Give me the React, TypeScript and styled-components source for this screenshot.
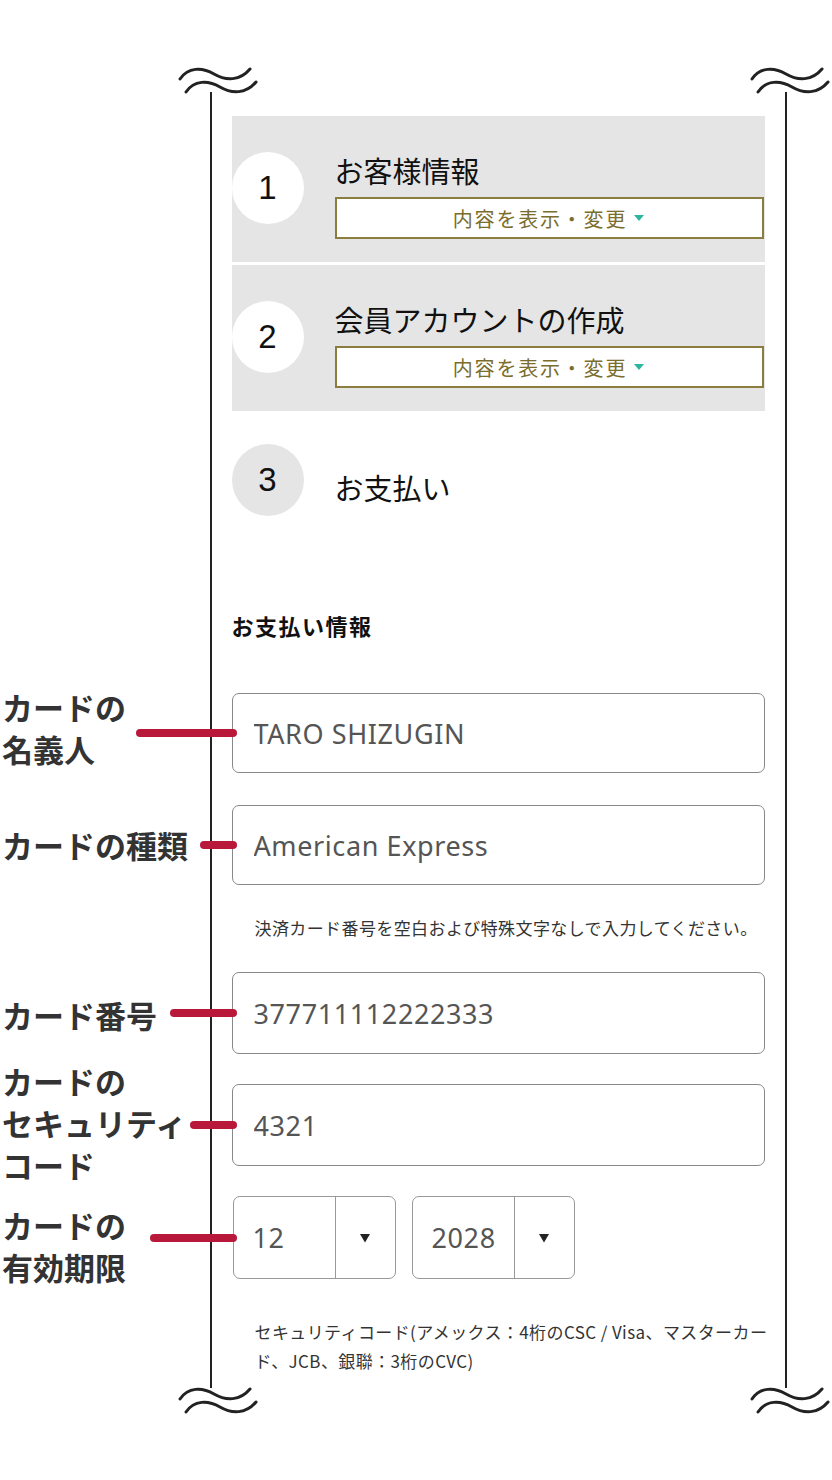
import React from 'react';
import styled, { createGlobalStyle } from 'styled-components';

const Global = createGlobalStyle`
  html, body { margin: 0; padding: 0; background: #fff; }
  body { font-family: "Noto Sans CJK JP", "Noto Sans", sans-serif; color: #222; }
  * { box-sizing: border-box; }
`;

const Page = styled.div`
  width: 832px;
  min-height: 1480px;
  padding-top: 64px;
  background: #fff;
`;

const WaveRow = styled.div<{ $top?: boolean }>`
  display: flex;
  justify-content: space-between;
  height: 32px;
  padding: 0 2px 0 178px;
  margin: ${(p) => (p.$top ? '0 0 -4px 0' : '-4px 0 0 0')};
  position: relative;
  z-index: 2;
`;

const Row = styled.div`
  display: grid;
  grid-template-columns: 210px 577px;
`;

const LabelCell = styled.div<{ $h: number }>`
  align-self: end;
  height: ${(p) => p.$h}px;
  display: flex;
  align-items: center;
  padding-left: 2px;
`;

const Label = styled.div<{ $dy: number }>`
  font-size: 31px;
  font-weight: 700;
  line-height: 42px;
  color: #333;
  white-space: nowrap;
  transform: translateY(${(p) => p.$dy}px);
`;

const Connector = styled.div<{ $w: number }>`
  width: ${(p) => p.$w}px;
  height: 8px;
  border-radius: 4px;
  background: #b8193b;
  margin-left: auto;
  margin-right: -27px;
  flex-shrink: 0;
  position: relative;
  z-index: 1;
`;

const Lane = styled.div<{ $pt: number; $pb?: number }>`
  border-left: 2.5px solid #222;
  border-right: 2.5px solid #222;
  padding: ${(p) => p.$pt}px 20.5px ${(p) => p.$pb ?? 0}px 19.5px;
  display: flex;
  flex-direction: column;
`;

const StepCard = styled.div`
  display: flex;
  align-items: flex-start;
  gap: 31px;
  background: #e5e5e5;
  padding: 36px 1px 23px 0;
  & + & { margin-top: 3px; }
`;

const Circle = styled.div<{ $grey?: boolean }>`
  width: 72px;
  height: 72px;
  flex-shrink: 0;
  border-radius: 50%;
  background: ${(p) => (p.$grey ? '#e5e5e5' : '#fff')};
  display: flex;
  align-items: center;
  justify-content: center;
  font-family: "Liberation Sans", Arial, sans-serif;
  font-size: 33px;
  color: #111;
`;

const StepBody = styled.div`
  flex: 1;
  display: flex;
  flex-direction: column;
  padding-top: 1px;
`;

const StepTitle = styled.div<{ $pt?: number }>`
  font-size: 29px;
  line-height: 34px;
  color: #111;
  padding-top: ${(p) => p.$pt ?? 0}px;
`;

const ToggleButton = styled.div`
  margin-top: 10px;
  height: 42px;
  border: 2px solid #8a7d3e;
  background: #fff;
  color: #7b6d2c;
  font-size: 20px;
  letter-spacing: 1.8px;
  display: flex;
  align-items: center;
  justify-content: center;
  gap: 6px;
`;

const StepPlain = styled.div`
  display: flex;
  align-items: center;
  gap: 31px;
  margin-top: 33px;
`;

const Heading = styled.div`
  margin-top: 95px;
  font-size: 22px;
  font-weight: 700;
  line-height: 28px;
  letter-spacing: 1.5px;
  color: #111;
`;

const TextInput = styled.input<{ $h: number }>`
  width: 100%;
  height: ${(p) => p.$h}px;
  border: 1.5px solid #888;
  border-radius: 7px;
  padding: 0 21px;
  background: transparent;
  font-family: "Noto Sans", "Noto Sans CJK JP", sans-serif;
  font-size: 27px;
  letter-spacing: 0.6px;
  color: #555;
  outline: none;
`;

const Note = styled.div<{ $mb?: number }>`
  padding-left: 23px;
  font-size: 17px;
  line-height: 24px;
  letter-spacing: 0.4px;
  color: #333;
  margin-bottom: ${(p) => p.$mb ?? 0}px;
  white-space: nowrap;
`;

const FootNote = styled(Note)`
  line-height: 29px;
`;

const SelectRow = styled.div`
  display: flex;
  gap: 16px;
  padding-left: 1px;
`;

const SelectBox = styled.div`
  width: 163px;
  height: 83px;
  border: 1.5px solid #999;
  border-radius: 7px;
  display: flex;
`;

const SelectValue = styled.div`
  width: 102px;
  border-right: 1.5px solid #999;
  display: flex;
  align-items: center;
  padding-left: 19px;
  font-family: "Noto Sans", "Noto Sans CJK JP", sans-serif;
  font-size: 27px;
  letter-spacing: 0.6px;
  color: #555;
`;

const SelectArrow = styled.div`
  flex: 1;
  display: flex;
  align-items: center;
  justify-content: center;
`;

const Wave = () => (
  <svg width="80" height="32" viewBox="0 0 80 32" fill="none">
    <path d="M2 15 C 10 3, 24 3, 36 10 S 62 17, 72 5" stroke="#222" strokeWidth="3" strokeLinecap="round" />
    <path d="M8 28 C 16 16, 30 16, 42 23 S 68 30, 78 18" stroke="#222" strokeWidth="3" strokeLinecap="round" />
  </svg>
);

const Caret = () => (
  <svg width="12" height="8" viewBox="0 0 12 8">
    <polygon points="1,1 11,1 6,7" fill="#2cb5a0" />
  </svg>
);

const DownArrow = () => (
  <svg width="10" height="10" viewBox="0 0 10 10">
    <polygon points="0,1 10,1 5,9.5" fill="#222" />
  </svg>
);

type FieldProps = {
  label: React.ReactNode;
  dy: number;
  lineWidth: number;
  pt: number;
  h: number;
  children: React.ReactNode;
};

const FieldRow = ({ label, dy, lineWidth, pt, h, children }: FieldProps) => (
  <Row>
    <LabelCell $h={h}>
      <Label $dy={dy}>{label}</Label>
      <Connector $w={lineWidth} />
    </LabelCell>
    <Lane $pt={pt}>{children}</Lane>
  </Row>
);

export default function App() {
  return (
    <Page>
      <Global />
      <WaveRow $top>
        <Wave />
        <Wave />
      </WaveRow>

      <Row>
        <div />
        <Lane $pt={24} $pb={54}>
          <StepCard>
            <Circle>1</Circle>
            <StepBody>
              <StepTitle>お客様情報</StepTitle>
              <ToggleButton>
                内容を表示・変更
                <Caret />
              </ToggleButton>
            </StepBody>
          </StepCard>
          <StepCard>
            <Circle>2</Circle>
            <StepBody>
              <StepTitle>会員アカウントの作成</StepTitle>
              <ToggleButton>
                内容を表示・変更
                <Caret />
              </ToggleButton>
            </StepBody>
          </StepCard>
          <StepPlain>
            <Circle $grey>3</Circle>
            <StepTitle $pt={14}>お支払い</StepTitle>
          </StepPlain>
          <Heading>お支払い情報</Heading>
        </Lane>
      </Row>

      <FieldRow
        label={<>カードの<br />名義人</>}
        dy={-5}
        lineWidth={101}
        pt={0}
        h={80}
      >
        <TextInput $h={80} readOnly value="TARO SHIZUGIN" />
      </FieldRow>

      <FieldRow label="カードの種類" dy={0} lineWidth={37} pt={32} h={80}>
        <TextInput $h={80} readOnly value="American Express" />
      </FieldRow>

      <FieldRow label="カード番号" dy={2} lineWidth={67} pt={31} h={82}>
        <Note $mb={32}>決済カード番号を空白および特殊文字なしで入力してください。</Note>
        <TextInput $h={82} readOnly value="377711112222333" />
      </FieldRow>

      <FieldRow
        label={<>カードの<br />セキュリティ<br />コード</>}
        dy={-2}
        lineWidth={47}
        pt={30}
        h={82}
      >
        <TextInput $h={82} readOnly value="4321" />
      </FieldRow>

      <FieldRow
        label={<>カードの<br />有効期限</>}
        dy={8}
        lineWidth={87}
        pt={30}
        h={83}
      >
        <SelectRow>
          <SelectBox>
            <SelectValue>12</SelectValue>
            <SelectArrow><DownArrow /></SelectArrow>
          </SelectBox>
          <SelectBox>
            <SelectValue>2028</SelectValue>
            <SelectArrow><DownArrow /></SelectArrow>
          </SelectBox>
        </SelectRow>
      </FieldRow>

      <Row>
        <div />
        <Lane $pt={38} $pb={13}>
          <FootNote>
            セキュリティコード(アメックス：4桁のCSC / Visa、マスターカー
            <br />
            ド、JCB、銀聯：3桁のCVC)
          </FootNote>
        </Lane>
      </Row>

      <WaveRow>
        <Wave />
        <Wave />
      </WaveRow>
    </Page>
  );
}
